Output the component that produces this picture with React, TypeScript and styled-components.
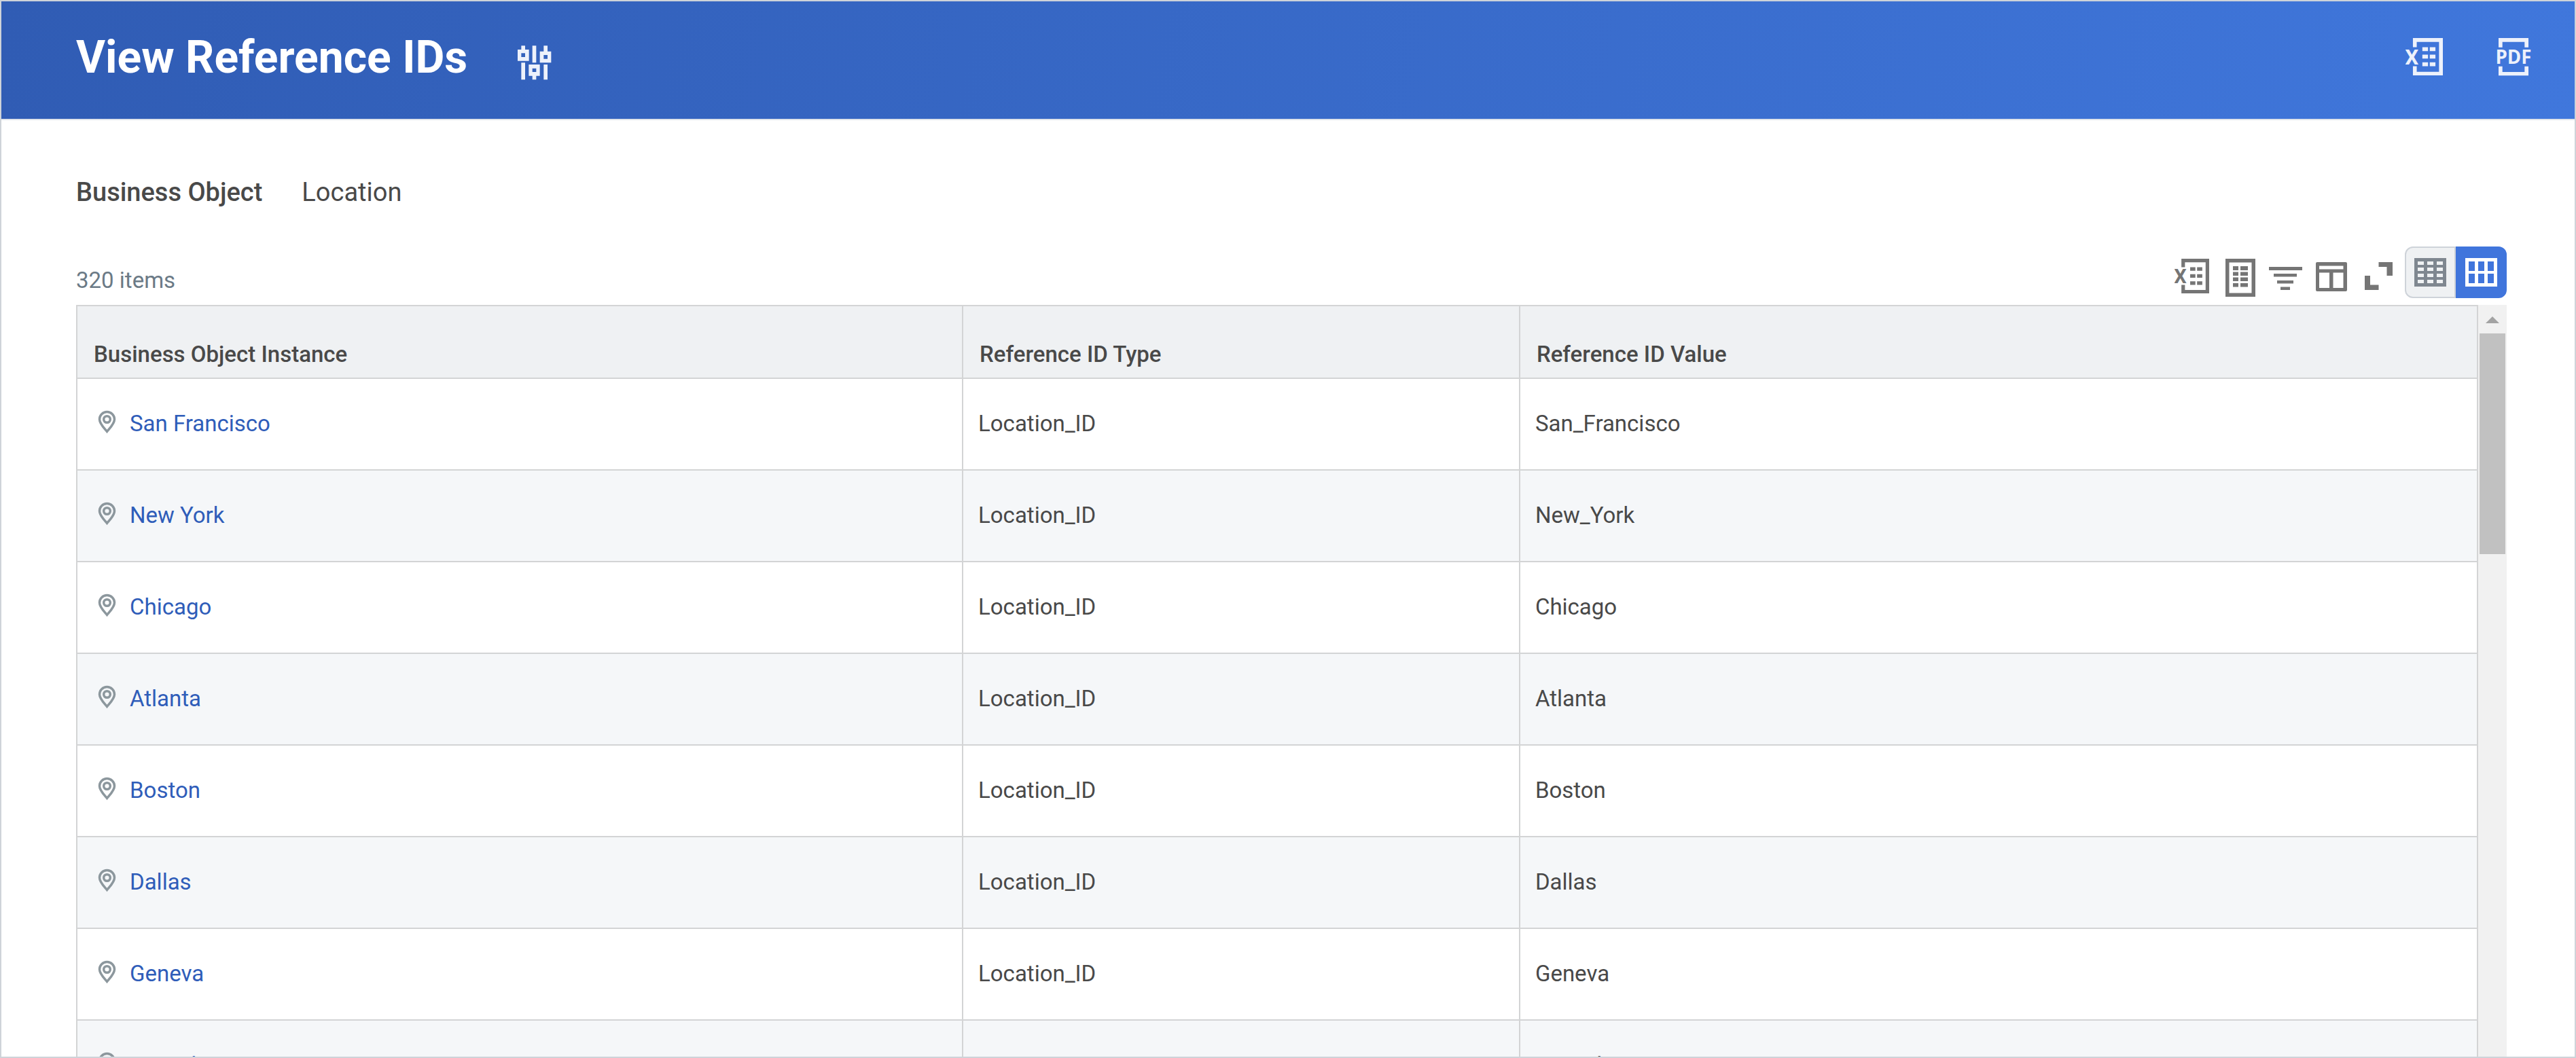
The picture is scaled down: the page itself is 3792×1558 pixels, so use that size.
import React from 'react';
import styled, { createGlobalStyle } from 'styled-components';

const GlobalStyle = createGlobalStyle`
  * { box-sizing: border-box; }
  body {
    margin: 0;
    background: #ffffff;
    color: #494949;
    font-family: Roboto, "Liberation Sans", sans-serif;
  }
  button { font: inherit; color: inherit; }
`;

const Page = styled.div`
  display: flex;
  flex-direction: column;
  height: 100vh;
  overflow: hidden;
  border: 2px solid #ced3d9;
`;

const Header = styled.header`
  display: flex;
  align-items: center;
  justify-content: space-between;
  flex: none;
  padding: 42px 64px 50px 110px;
  border-bottom: 2px solid #e0e4ea;
  background: linear-gradient(100deg, #305cb4 0%, #4077dc 100%);
  color: #edf1fb;
`;

const TitleGroup = styled.div`
  display: flex;
  align-items: center;
  gap: 74px;
`;

const Title = styled.h1`
  margin: 0;
  color: #ffffff;
  font-size: 66px;
  font-weight: 700;
  line-height: 81px;
`;

const HeaderActions = styled.div`
  display: flex;
  gap: 75px;
  padding-bottom: 2px;
`;

const IconButton = styled.button`
  display: block;
  padding: 0;
  border: 0;
  background: none;
  cursor: pointer;
  svg { display: block; }
`;

const Content = styled.main`
  display: flex;
  flex-direction: column;
  flex: 1;
  min-height: 0;
  padding: 82px 100px 0 110px;
`;

const Fields = styled.dl`
  display: flex;
  gap: 58px;
  margin: 0 0 56px;
  font-size: 38px;
  line-height: 48px;
`;

const FieldLabel = styled.dt`
  font-weight: 500;
`;

const FieldValue = styled.dd`
  margin: 0;
`;

const GridBar = styled.div`
  display: flex;
  align-items: flex-end;
  justify-content: space-between;
  margin-bottom: 10px;
`;

const ItemCount = styled.span`
  padding-bottom: 6px;
  color: #6b7a86;
  font-size: 33px;
  line-height: 40px;
`;

const Tools = styled.div`
  display: flex;
  align-items: flex-end;
  gap: 18px;
  color: #757575;
`;

const GridActions = styled.div`
  display: flex;
  gap: 18px;
  padding-bottom: 2px;
`;

const Toggle = styled.div`
  display: flex;
`;

const ToggleButton = styled.button<{ $active?: boolean }>`
  display: flex;
  align-items: center;
  justify-content: center;
  width: 75px;
  height: 76px;
  padding: 0;
  border: 2px solid ${(p) => (p.$active ? '#4075dc' : '#ced3d9')};
  border-radius: ${(p) => (p.$active ? '0 12px 12px 0' : '12px 0 0 12px')};
  background: ${(p) => (p.$active ? '#4075dc' : '#eff1f3')};
  color: ${(p) => (p.$active ? '#ffffff' : '#7f8790')};
  cursor: pointer;
`;

const GridArea = styled.div`
  display: flex;
  flex: 1;
  min-height: 0;
`;

const TableClip = styled.div`
  flex: 1;
  min-width: 0;
  overflow: hidden;
`;

const Table = styled.table`
  width: 100%;
  table-layout: fixed;
  border-collapse: separate;
  border-spacing: 0;
  border: solid #d3d4d5;
  border-width: 2px 0 0 2px;
`;

const HeadCell = styled.th<{ $width?: string }>`
  width: ${(p) => p.$width ?? 'auto'};
  height: 107px;
  padding: 36px 24px 0;
  border: solid #d3d4d5;
  border-width: 0 2px 2px 0;
  background: #eff1f3;
  font-size: 33px;
  font-weight: 500;
  line-height: 40px;
  text-align: left;
`;

const Row = styled.tr`
  &:nth-child(even) { background: #f5f7f9; }
`;

const Cell = styled.td`
  height: 135px;
  padding: 0 22px 2px;
  border: solid #d3d4d5;
  border-width: 0 2px 2px 0;
  font-size: 33px;
  line-height: 40px;
`;

const Instance = styled.div`
  display: flex;
  align-items: center;
  gap: 20px;
  padding-left: 8px;
  svg { flex: none; }
`;

const InstanceLink = styled.a`
  color: #2f5db9;
  text-decoration: none;
`;

const ScrollTrack = styled.div`
  display: flex;
  flex-direction: column;
  flex: none;
  width: 42px;
  padding: 0 2px;
  background: #f1f1f1;
`;

const ScrollUp = styled.button`
  display: flex;
  align-items: center;
  justify-content: center;
  height: 42px;
  padding: 2px 0 0;
  border: 0;
  background: none;
`;

const ScrollThumb = styled.div`
  height: 325px;
  background: #c1c1c1;
`;

const SlidersIcon = () => (
  <svg width="50" height="66" viewBox="0 -46 150 198" fill="currentColor" aria-hidden="true">
    <path d="M16 0h17v17h17v50H0V17h16zM16 33v17h17V33zM16 75h17v75H16zM65 0h17v75H65zM49 83h49v50H82v17H65v-17H49zM65 100v16h17v-16zM115 0h17v25h16v50H98V25h17zM115 41v17h17V41zM115 83h17v67h-17z" fillRule="evenodd" />
  </svg>
);

const ExcelIcon = ({ size, width }: { size: number; width: number }) => (
  <svg width={width} height={56} viewBox={`0 0 ${(width * 166) / size} ${(56 * 166) / size}`} fill="currentColor" aria-hidden="true">
    <path d="M33 0h133v166H33v-41h17v25h99V17H50v24H33z" />
    <path d="M75 41h25v17H75zM108 41h25v17h-25zM75 74h25v17H75zM108 74h25v17h-25zM75 108h25v17H75zM108 108h25v17h-25z" />
    <text x="28" y="117" textAnchor="middle" fontFamily="Roboto, sans-serif" fontWeight="700" fontSize="95">X</text>
  </svg>
);

const PdfIcon = () => (
  <svg width="52" height="56" viewBox="0 0 156 168" fill="currentColor" aria-hidden="true">
    <path d="M12 0h132v41h-17V17H29v24H12zM12 125h17v25h98v-25h17v41H12z" />
    <text x="78" y="113" textAnchor="middle" fontFamily="Open Sans, sans-serif" fontWeight="700" fontSize="83">PDF</text>
  </svg>
);

const WorksheetIcon = () => (
  <svg width="47" height="56" viewBox="0 0 47 56" fill="currentColor" aria-hidden="true">
    <path d="M2 0h44v56H2zM7.500 5.500v45h33v-45z" fillRule="evenodd" />
    <path d="M13 11h8v6h-8zM24 11h11v6H24zM13 19.500h8v5.500h-8zM24 19.500h11V25H24zM13 27.500h8V33h-8zM24 27.500h11V33H24zM13 36h8v5.500h-8zM24 36h11v5.500H24z" />
  </svg>
);

const FilterIcon = () => (
  <svg width="51" height="56" viewBox="0 0 51 56" fill="currentColor" aria-hidden="true">
    <path d="M1 12h49v5H1zM8 22h34v4.500H8zM13 32h24v4.500H13zM18 41.500h14V46H18z" />
  </svg>
);

const LayoutIcon = () => (
  <svg width="52" height="56" viewBox="0 0 52 56" fill="currentColor" aria-hidden="true">
    <path d="M3 5h42q2 0 2 2v39q0 2-2 2H3q-2 0-2-2V7q0-2 2-2zM6 10.500v5h35.500v-5zM6 20.500V43h15V20.500zM26.500 20.500V43h15V20.500z" fillRule="evenodd" />
  </svg>
);

const ExpandIcon = () => (
  <svg width="44" height="56" viewBox="0 0 44 56" fill="currentColor" aria-hidden="true">
    <path d="M23.500 5H44v20h-8.500V12h-12zM3 25h8v13.500h12.500V46H3z" />
  </svg>
);

const GridIcon = ({ tops, cell }: { tops: number[]; cell: number }) => (
  <svg width="47" height="42" viewBox="0 0 47 42" aria-hidden="true">
    <path
      fill="currentColor"
      fillRule="evenodd"
      d={'M0 0h47v42H0z' + tops.map((y) => [5, 19, 33].map((x) => `M${x} ${y}v${cell}h9v-${cell}z`).join('')).join('')}
    />
  </svg>
);

const PinIcon = () => (
  <svg width="27" height="42" viewBox="0 0 27 42" fill="none" stroke="#8c979d" strokeWidth="3.500" aria-hidden="true">
    <path d="M13.500 32.500C9 27 2.500 21 2.500 14.500a11 11 0 0 1 22 0C24.500 21 18 27 13.500 32.500z" />
    <circle cx="13.500" cy="14.500" r="4.800" />
  </svg>
);

const locations = ['San Francisco', 'New York', 'Chicago', 'Atlanta', 'Boston', 'Dallas', 'Geneva', 'Munich'];

export default function App() {
  return (
    <>
      <GlobalStyle />
      <Page>
        <Header>
          <TitleGroup>
            <Title>View Reference IDs</Title>
            <IconButton aria-label="Edit parameters"><SlidersIcon /></IconButton>
          </TitleGroup>
          <HeaderActions>
            <IconButton aria-label="Export to Excel"><ExcelIcon size={55} width={58} /></IconButton>
            <IconButton aria-label="View printable version"><PdfIcon /></IconButton>
          </HeaderActions>
        </Header>
        <Content>
          <Fields>
            <FieldLabel>Business Object</FieldLabel>
            <FieldValue>Location</FieldValue>
          </Fields>
          <GridBar>
            <ItemCount>320 items</ItemCount>
            <Tools>
              <GridActions>
                <IconButton aria-label="Export grid to Excel"><ExcelIcon size={51} width={55} /></IconButton>
                <IconButton aria-label="Open in worksheet"><WorksheetIcon /></IconButton>
                <IconButton aria-label="Filter"><FilterIcon /></IconButton>
                <IconButton aria-label="Column preferences"><LayoutIcon /></IconButton>
                <IconButton aria-label="Full screen"><ExpandIcon /></IconButton>
              </GridActions>
              <Toggle role="group" aria-label="Row density">
                <ToggleButton aria-label="Compact rows" aria-pressed="false">
                  <GridIcon tops={[5, 14, 23, 32]} cell={5} />
                </ToggleButton>
                <ToggleButton $active aria-label="Expanded rows" aria-pressed="true">
                  <GridIcon tops={[5, 23]} cell={14} />
                </ToggleButton>
              </Toggle>
            </Tools>
          </GridBar>
          <GridArea>
            <TableClip>
              <Table>
                <thead>
                  <tr>
                    <HeadCell scope="col" $width="36.9%">Business Object Instance</HeadCell>
                    <HeadCell scope="col" $width="23.2%">Reference ID Type</HeadCell>
                    <HeadCell scope="col">Reference ID Value</HeadCell>
                  </tr>
                </thead>
                <tbody>
                  {locations.map((name) => (
                    <Row key={name}>
                      <Cell>
                        <Instance>
                          <PinIcon />
                          <InstanceLink href="#">{name}</InstanceLink>
                        </Instance>
                      </Cell>
                      <Cell>Location_ID</Cell>
                      <Cell>{name.replace(' ', '_')}</Cell>
                    </Row>
                  ))}
                </tbody>
              </Table>
            </TableClip>
            <ScrollTrack>
              <ScrollUp aria-label="Scroll up">
                <svg width="20" height="10" viewBox="0 0 20 10" aria-hidden="true">
                  <path d="M10 0l10 10H0z" fill="#a3a3a3" />
                </svg>
              </ScrollUp>
              <ScrollThumb />
            </ScrollTrack>
          </GridArea>
        </Content>
      </Page>
    </>
  );
}
